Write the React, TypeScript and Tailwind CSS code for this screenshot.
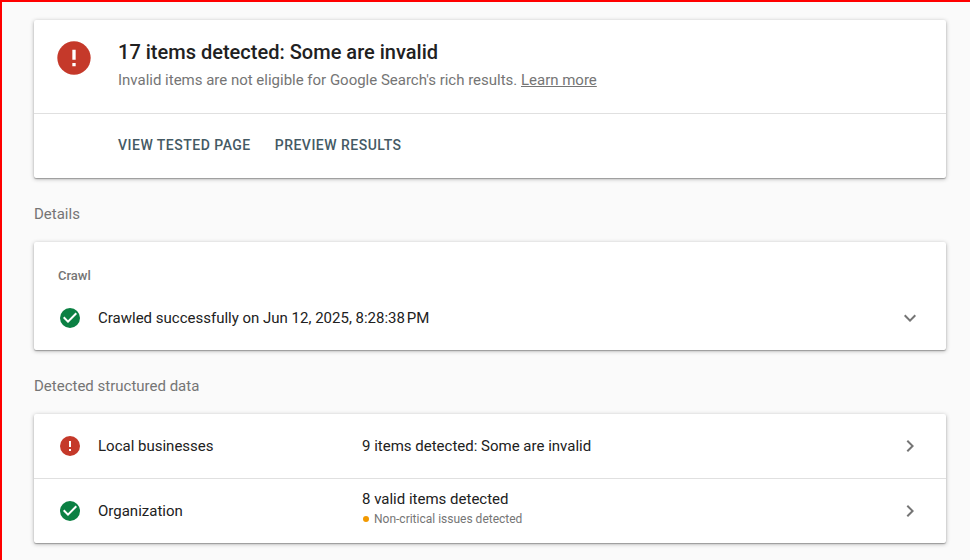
import React from "react";

const CARD = "bg-white rounded-[2px] shadow-[0_1px_1px_0_rgba(0,0,0,0.25),0_1px_4px_0_rgba(0,0,0,0.3)]";

function ErrorIcon({ size }: { size: number }) {
  return (
    <svg width={size} height={size} viewBox="0 0 24 24" className="shrink-0">
      <circle cx="12" cy="12" r="10" fill="#c5392a" />
      <path fill="#fff" d="M11 7h2v6h-2zM11 15h2v2h-2z" />
    </svg>
  );
}

function CheckIcon() {
  return (
    <svg width="24" height="24" viewBox="0 0 24 24" className="shrink-0">
      <circle cx="12" cy="12" r="10" fill="#0b8043" />
      <path fill="#fff" d="M10 17l-5-5 1.41-1.41L10 14.17l7.59-7.59L19 8l-9 9z" />
    </svg>
  );
}

function Chevron({ down = false }: { down?: boolean }) {
  return (
    <svg width="24" height="24" viewBox="0 0 24 24" className="shrink-0" fill="#757575">
      <path d={down ? "M7.41 8.59L12 13.17l4.59-4.58L18 10l-6 6-6-6 1.41-1.41z" : "M10 6L8.59 7.41 13.17 12l-4.58 4.59L10 18l6-6z"} />
    </svg>
  );
}

export default function App() {
  return (
    <div className="h-[560px] w-[970px] overflow-hidden border-l-2 border-t-2 border-[#f00] bg-[#fafafa] pl-8 pr-6 pt-[18px] font-['Roboto',sans-serif] text-[15px] leading-5 text-[#212121]">
      <section className={`${CARD} h-[158px]`}>
        <div className="flex h-[94px] border-b border-[#e0e0e0] pl-5 pt-[18px]">
          <ErrorIcon size={40} />
          <div className="pl-6">
            <h1 className="text-xl font-medium leading-7 tracking-[0.01px]">17 items detected: Some are invalid</h1>
            <p className="mt-1 tracking-[-0.008px] text-[#757575]">
              Invalid items are not eligible for Google Search's rich results. <a className="underline">Learn more</a>
            </p>
          </div>
        </div>
        <div className="flex h-16 items-center gap-6 pb-0.5 pl-[84px] text-sm font-medium tracking-[0.49px] text-[#455a64]">
          <button>VIEW TESTED PAGE</button>
          <button>PREVIEW RESULTS</button>
        </div>
      </section>
      <h2 className="mt-[26px] text-[#757575]">Details</h2>
      <section className={`${CARD} mt-[18px] h-[108px] px-6 pt-6`}>
        <h3 className="text-[13px] font-medium text-[#757575]">Crawl</h3>
        <div className="mt-5 flex items-center">
          <CheckIcon />
          <span className="ml-4 grow">Crawled successfully on Jun 12, 2025, 8:28:38&#8239;PM</span>
          <Chevron down />
        </div>
      </section>
      <h2 className="mt-[26px] text-[#757575]">Detected structured data</h2>
      <section className={`${CARD} mt-[18px]`}>
        <div className="flex h-[65px] items-center border-b border-[#e0e0e0] px-6">
          <ErrorIcon size={24} />
          <span className="ml-4 w-[264px]">Local businesses</span>
          <span className="grow">9 items detected: Some are invalid</span>
          <Chevron />
        </div>
        <div className="flex h-16 items-center px-6">
          <CheckIcon />
          <span className="ml-4 w-[264px]">Organization</span>
          <div className="grow pb-1">
            <div>8 valid items detected</div>
            <div className="flex items-center text-xs leading-5 text-[#757575]">
              <span className="ml-px mr-[5px] size-1.5 rounded-full bg-[#f29900]" />
              Non-critical issues detected
            </div>
          </div>
          <Chevron />
        </div>
      </section>
    </div>
  );
}
